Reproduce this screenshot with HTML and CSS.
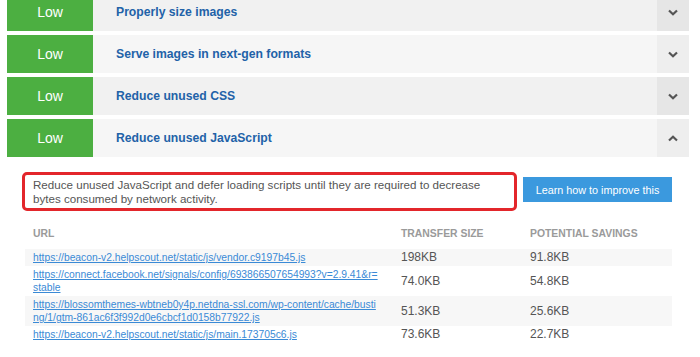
FILE: index.html
```html
<!DOCTYPE html>
<html>
<head>
<meta charset="utf-8">
<link rel="stylesheet" href="styles.css">
</head>
<body>
<div class="page">
  <div class="rules">
    <div class="rule dark">
      <div class="badge">Low</div>
      <div class="title">Properly size images</div>
      <div class="chev"><svg width="10" height="7" viewBox="0 0 10 7"><polyline points="1,1.5 5,5.2 9,1.5" fill="none" stroke="#555" stroke-width="2.2"/></svg></div>
    </div>
    <div class="rule light">
      <div class="badge">Low</div>
      <div class="title">Serve images in next-gen formats</div>
      <div class="chev"><svg width="10" height="7" viewBox="0 0 10 7"><polyline points="1,1.5 5,5.2 9,1.5" fill="none" stroke="#555" stroke-width="2.2"/></svg></div>
    </div>
    <div class="rule dark">
      <div class="badge">Low</div>
      <div class="title">Reduce unused CSS</div>
      <div class="chev"><svg width="10" height="7" viewBox="0 0 10 7"><polyline points="1,1.5 5,5.2 9,1.5" fill="none" stroke="#555" stroke-width="2.2"/></svg></div>
    </div>
    <div class="rule light">
      <div class="badge">Low</div>
      <div class="title">Reduce unused JavaScript</div>
      <div class="chev"><svg width="10" height="7" viewBox="0 0 10 7"><polyline points="1,5.5 5,1.8 9,5.5" fill="none" stroke="#555" stroke-width="2.2"/></svg></div>
    </div>
  </div>

  <div class="details">
    <div class="intro">
      <div class="desc">Reduce unused JavaScript and defer loading scripts until they are required to decrease bytes consumed by network activity.</div>
      <div class="learn">Learn how to improve this</div>
    </div>

    <div class="table">
      <div class="tr head">
        <div class="td">URL</div>
        <div class="td">TRANSFER SIZE</div>
        <div class="td">POTENTIAL SAVINGS</div>
      </div>
      <div class="tr stripe">
        <div class="td url"><a href="#">https://beacon-v2.helpscout.net/static/js/vendor.c9197b45.js</a></div>
        <div class="td val">198KB</div>
        <div class="td val">91.8KB</div>
      </div>
      <div class="tr">
        <div class="td url"><a href="#">https://connect.facebook.net/signals/config/693866507654993?v=2.9.41&amp;r=stable</a></div>
        <div class="td val">74.0KB</div>
        <div class="td val">54.8KB</div>
      </div>
      <div class="tr stripe">
        <div class="td url"><a href="#">https://blossomthemes-wbtneb0y4p.netdna-ssl.com/wp-content/cache/busting/1/gtm-861ac6f3f992d0e6cbcf1d0158b77922.js</a></div>
        <div class="td val">51.3KB</div>
        <div class="td val">25.6KB</div>
      </div>
      <div class="tr">
        <div class="td url"><a href="#">https://beacon-v2.helpscout.net/static/js/main.173705c6.js</a></div>
        <div class="td val">73.6KB</div>
        <div class="td val">22.7KB</div>
      </div>
    </div>
  </div>
</div>
</body>
</html>
```

FILE: styles.css
```css
* { box-sizing: border-box; }
html, body { margin: 0; padding: 0; background: #fff; }
body {
  font-family: "Liberation Sans", Arial, sans-serif;
  width: 700px;
  height: 357px;
  overflow: hidden;
}
.page {
  padding-left: 7px;
  width: 689px;
}
.rules {
  display: flex;
  flex-direction: column;
  gap: 4px;
  margin-top: -7px;
}
.rule {
  display: flex;
  height: 38px;
  align-items: stretch;
}
.rule.dark { background: #f1f1f1; }
.rule.light { background: #f6f6f6; }
.badge {
  width: 86px;
  background: #4caf41;
  color: #fff;
  font-size: 14px;
  display: flex;
  align-items: center;
  justify-content: center;
}
.title {
  flex: 1;
  display: flex;
  align-items: center;
  padding-left: 23px;
  font-size: 12.2px;
  font-weight: bold;
  color: #2262a8;
}
.chev {
  width: 32px;
  display: flex;
  align-items: center;
  justify-content: center;
}
.rule.dark .chev { background: #e6e6e6; }
.rule.light .chev { background: #eeeeee; }

.details {
  padding-left: 15px;
  padding-top: 15px;
}
.intro {
  display: flex;
  align-items: flex-start;
  gap: 6px;
}
.desc {
  width: 495px;
  border: 3px solid #e3262b;
  border-radius: 5px;
  padding: 3px 16px 2px 8px;
  font-size: 11.6px;
  line-height: 14px;
  color: #555;
}
.learn {
  margin-top: 5px;
  width: 149px;
  height: 25px;
  background: #3b99de;
  color: #fff;
  font-size: 10.8px;
  display: flex;
  align-items: center;
  justify-content: center;
}

.table {
  margin-top: 16px;
  margin-left: 3px;
  width: 647px;
}
.tr {
  display: grid;
  grid-template-columns: 368px 129px 150px;
  align-items: center;
}
.td {
  padding: 2px 12px 2px 8px;
}
.head .td {
  padding-top: 0;
  padding-bottom: 9px;
  font-size: 10.4px;
  font-weight: bold;
  line-height: 13px;
  color: #9a9a9a;
}
.stripe { background: #f7f7f7; }
.url {
  font-size: 10.3px;
  line-height: 13px;
  word-break: break-all;
}
.url a { color: #3a8ad6; text-decoration: underline; }
.val {
  font-size: 12px;
  line-height: 13px;
  color: #555;
}
```
